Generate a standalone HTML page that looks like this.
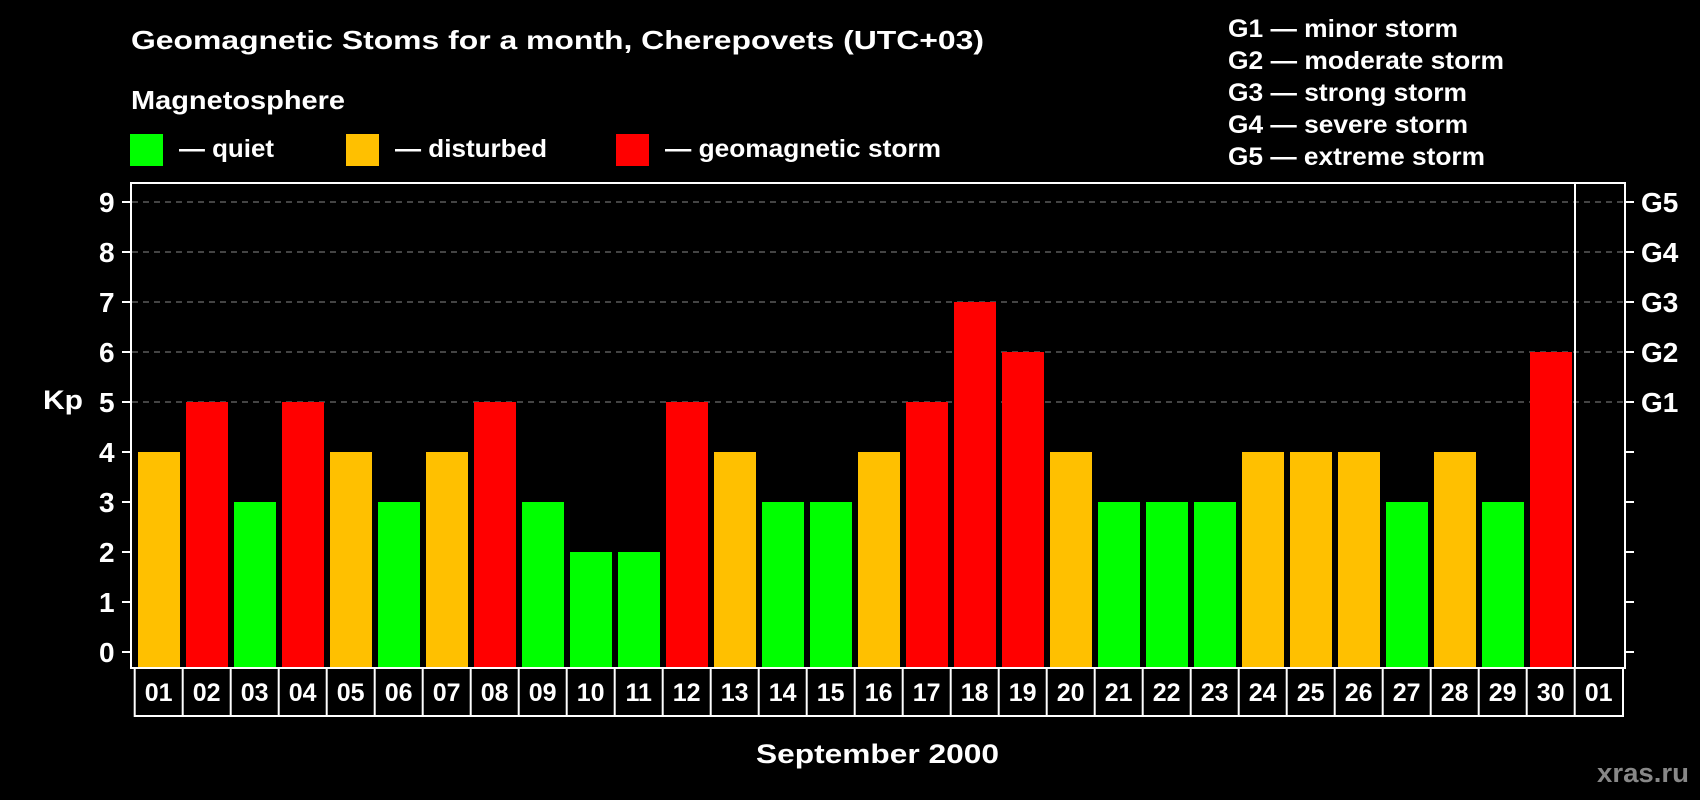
<!DOCTYPE html>
<html><head><meta charset="utf-8"><style>
html,body{margin:0;padding:0;background:#000;width:1700px;height:800px;overflow:hidden}
svg{display:block}
text{font-family:"Liberation Sans",Arial,sans-serif;font-weight:bold;fill:#fff}
</style></head><body>
<svg width="1700" height="800" viewBox="0 0 1700 800" xmlns="http://www.w3.org/2000/svg">
<rect width="1700" height="800" fill="#000"/>
<text x="131" y="49" font-size="26" textLength="853" lengthAdjust="spacingAndGlyphs">Geomagnetic Stoms for a month, Cherepovets (UTC+03)</text>
<text x="131" y="109" font-size="26" textLength="214" lengthAdjust="spacingAndGlyphs">Magnetosphere</text>
<rect x="130" y="134" width="33" height="32" fill="#00ff00"/>
<text x="179" y="157" font-size="25" textLength="95" lengthAdjust="spacingAndGlyphs">— quiet</text>
<rect x="346" y="134" width="33" height="32" fill="#ffc000"/>
<text x="395" y="157" font-size="25" textLength="152" lengthAdjust="spacingAndGlyphs">— disturbed</text>
<rect x="616" y="134" width="33" height="32" fill="#ff0000"/>
<text x="665" y="157" font-size="25" textLength="276" lengthAdjust="spacingAndGlyphs">— geomagnetic storm</text>
<g font-size="25">
<text x="1228" y="37" textLength="230" lengthAdjust="spacingAndGlyphs">G1 — minor storm</text>
<text x="1228" y="69" textLength="276" lengthAdjust="spacingAndGlyphs">G2 — moderate storm</text>
<text x="1228" y="101" textLength="239" lengthAdjust="spacingAndGlyphs">G3 — strong storm</text>
<text x="1228" y="133" textLength="240" lengthAdjust="spacingAndGlyphs">G4 — severe storm</text>
<text x="1228" y="165" textLength="257" lengthAdjust="spacingAndGlyphs">G5 — extreme storm</text>
</g>
<g id="grid" stroke="#888" stroke-width="1" stroke-dasharray="6,5">
<line x1="132" x2="1624" y1="202" y2="202"/>
<line x1="132" x2="1624" y1="252" y2="252"/>
<line x1="132" x2="1624" y1="302" y2="302"/>
<line x1="132" x2="1624" y1="352" y2="352"/>
<line x1="132" x2="1624" y1="402" y2="402"/>
</g>
<g id="bars"></g>
<g stroke="#fff" stroke-width="2" fill="none">
<rect x="131" y="183" width="1494" height="485"/>
<line x1="1575" y1="183" x2="1575" y2="668"/>
</g>
<g id="ticks" stroke="#fff" stroke-width="2"></g>
<g id="ylab" font-size="28"></g>
<text x="43" y="409" font-size="27" textLength="40" lengthAdjust="spacingAndGlyphs">Kp</text>
<g id="days" font-size="25"></g>
<text x="756" y="763" font-size="27" textLength="243" lengthAdjust="spacingAndGlyphs">September 2000</text>
<text x="1597" y="782" font-size="27" textLength="92" lengthAdjust="spacingAndGlyphs" style="fill:#888">xras.ru</text>
</svg>
<script>
var NS="http://www.w3.org/2000/svg";
function el(t,a,p,txt){var e=document.createElementNS(NS,t);for(var k in a)e.setAttribute(k,a[k]);if(txt!=null)e.textContent=txt;document.getElementById(p).appendChild(e);return e;}
var v=[4,5,3,5,4,3,4,5,3,2,2,5,4,3,3,4,5,7,6,4,3,3,3,4,4,4,3,4,3,6];
v.forEach(function(k,i){var c=k>=5?"#ff0000":(k==4?"#ffc000":"#00ff00");var y=652-k*50;el("rect",{x:138+48*i,y:y,width:42,height:668-y,fill:c},"bars");});
for(var k=0;k<=9;k++){var y=652-k*50;
el("line",{x1:122,x2:131,y1:y,y2:y},"ticks");
el("line",{x1:1625,x2:1634,y1:y,y2:y},"ticks");
el("text",{x:99,y:y+10},"ylab",String(k));
if(k>=5)el("text",{x:1641,y:y+10},"ylab","G"+(k-4));}
var d=el("g",{stroke:"#fff","stroke-width":2,fill:"none"},"ticks");
function ln(a){var e=document.createElementNS(NS,"line");for(var k in a)e.setAttribute(k,a[k]);d.appendChild(e);}
ln({x1:134.7,x2:1623,y1:716,y2:716});
for(var i=0;i<=31;i++){var x=134.7+48*i;if(i==31)x=1623;ln({x1:x,x2:x,y1:668,y2:717});}
for(var i=0;i<31;i++){var lab=i<30?String(i+1).padStart(2,"0"):"01";el("text",{x:158.7+48*i,y:701,"text-anchor":"middle"},"days",lab);}
</script>
</body></html>
